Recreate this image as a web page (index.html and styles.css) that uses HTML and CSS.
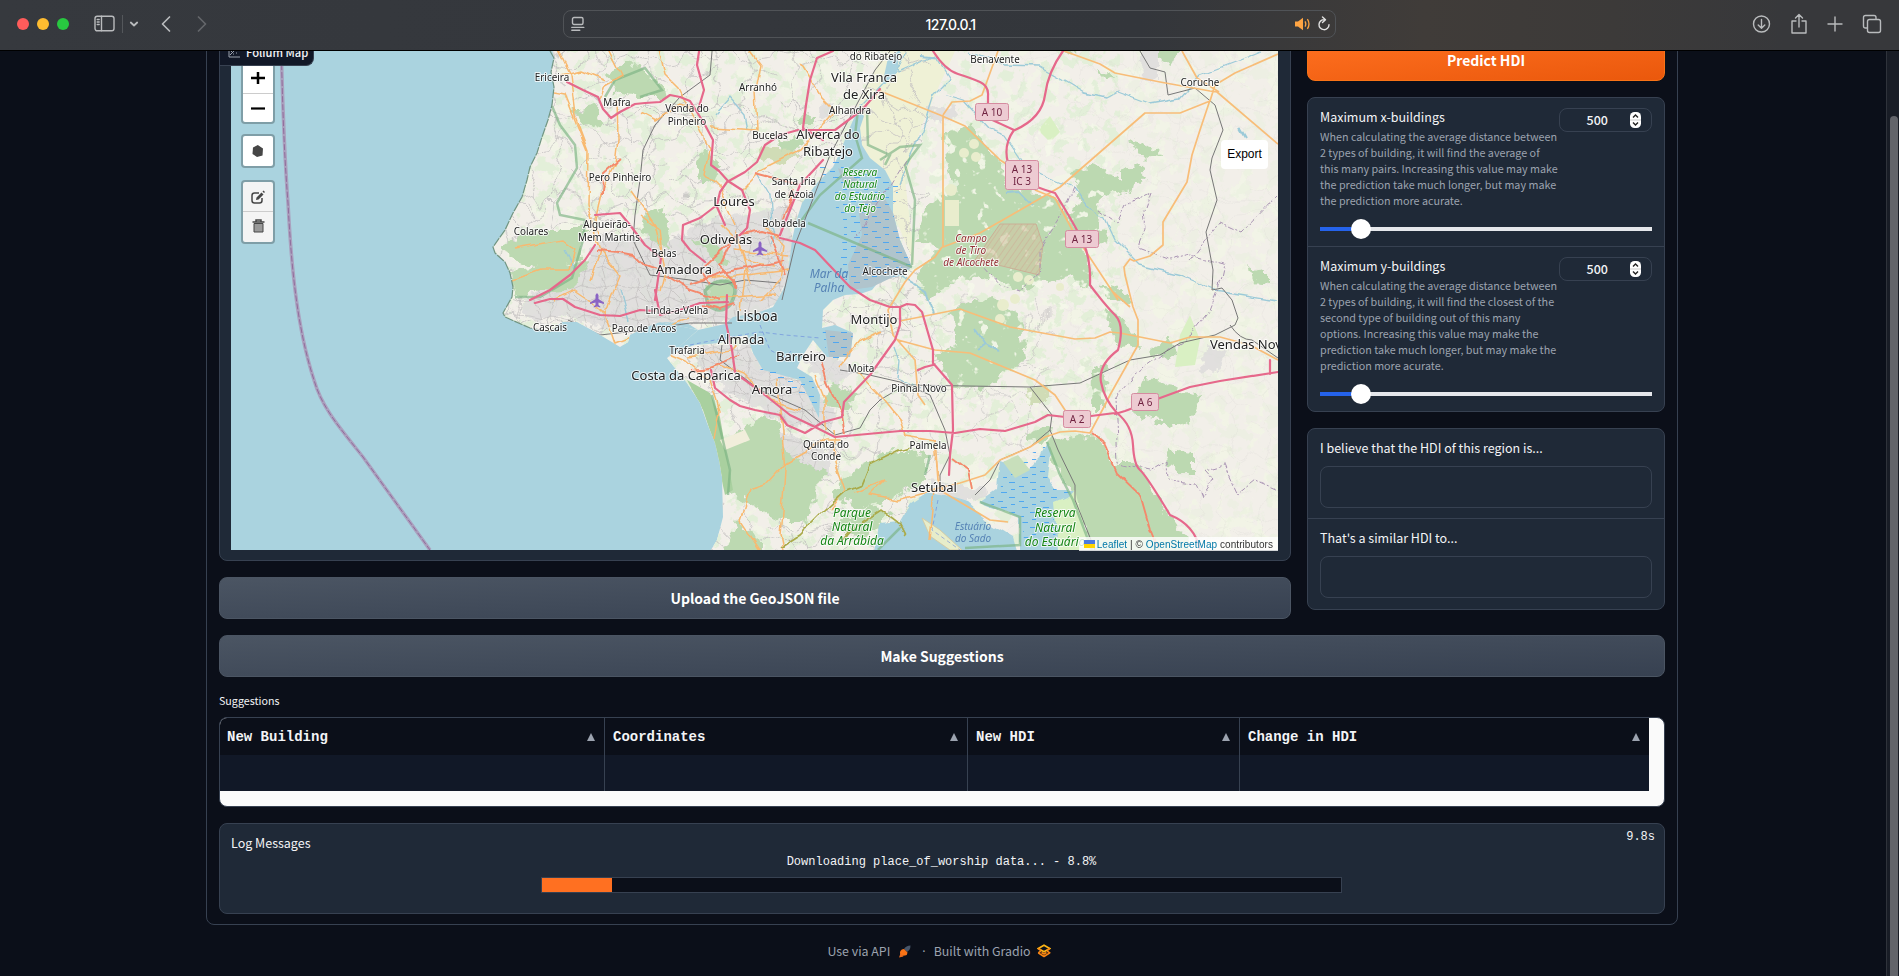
FILE: index.html
```html
<!DOCTYPE html>
<html lang="en">
<head>
<meta charset="utf-8">
<title>127.0.0.1</title>
<link rel="stylesheet" href="styles.css">
</head>
<body>
<header class="toolbar">
  <div class="tools-left">
    <span class="light red"></span><span class="light yellow"></span><span class="light green"></span>
    <svg class="ico sidebar" width="22" height="18" viewBox="0 0 22 18"><rect x="1" y="1.2" width="19" height="14.6" rx="2.2"/><path d="M7.5 1.2v14.600M3.200 4.500h2M3.200 7h2M3.200 9.500h2"/></svg>
    <span class="sep"></span>
    <svg class="ico" width="10" height="8" viewBox="0 0 10 8"><path d="M1.800 2.500 5 5.500l3.200-3" stroke-width="1.800"/></svg>
    <svg class="ico back" width="12" height="18" viewBox="0 0 12 18"><path d="M9.500 2 2.500 9l7 7" stroke-width="1.700"/></svg>
    <svg class="ico forward" width="12" height="18" viewBox="0 0 12 18"><path d="m2.500 2 7 7-7 7" stroke-width="1.700"/></svg>
  </div>
  <div class="address">
    <svg class="ico" width="14" height="16" viewBox="0 0 14 16"><rect x="1.500" y="1.500" width="10.500" height="7" rx="1.500"/><path d="M.8 11.400h12M.8 14.300h8"/></svg>
    <span class="host">127.0.0.1</span>
    <svg class="speaker" width="16" height="14" viewBox="0 0 16 14"><path d="M0 4.500h3L8 .8v12.400L3 9.500H0z" fill="#fea443"/><path d="M10 4.300q1.600 2.700 0 5.400M12.400 2.200q3.200 4.800 0 9.600" fill="none" stroke="#fea443" stroke-width="1.300"/></svg>
    <svg class="ico reload" width="14" height="16" viewBox="0 0 14 16"><path d="M7.500 3.700A5 5 0 1 0 12 8.700M5.500 1l3 2.800-3 2.700" stroke-width="1.400"/></svg>
  </div>
  <div class="tools-right">
    <svg class="ico" width="19" height="20" viewBox="0 0 19 20"><circle cx="9.500" cy="10" r="8"/><path d="M9.500 5.500v8.500M6.200 11l3.300 3.200 3.300-3.200"/></svg>
    <svg class="ico" width="18" height="22" viewBox="0 0 18 22"><path d="M6 8H2v12h14V8h-4M9 14V2M5.500 5 9 1.500 12.500 5"/></svg>
    <svg class="ico" width="16" height="18" viewBox="0 0 16 18"><path d="M8 2v14M1 9h14"/></svg>
    <svg class="ico" width="20" height="20" viewBox="0 0 20 20"><rect x="5.500" y="5.500" width="13" height="13" rx="2"/><path d="M5 14H3.500q-2 0-2-2V3.500q0-2 2-2H12q2 0 2 2V5"/></svg>
  </div>
</header>
<main class="viewport">
  <div class="scrollbar"><div class="thumb"></div></div>
  <div class="app">
    <div class="columns">
      <section class="left">
        <div class="panel map-panel">
          <div class="block-label"><svg width="12" height="12" viewBox="0 0 12 12"><path d="M1 0v11h11M2 9l7-7M3 5l1 1M6 4h1M8 7h1M5 8h1M10 4h1" fill="none" stroke="#9ca3af"/></svg>Folium Map</div>
          <div class="map">
<svg class="tiles" width="1047" height="510" viewBox="231 40 1047 510">
  <defs>
    <pattern id="lanes" width="96" height="84" patternUnits="userSpaceOnUse"><g fill="none" stroke="#c4c1c1" stroke-width=".8" stroke-linejoin="round">
      <path d="M0 14l12 5 7-4 13 8 12-3 9 10 16-4 10 8 17-3M0 56l9-6 14 7 9-4 13 12 15-5 9 7 12-9 15-2M22 0l-5 12 8 13-5 13 9 12-6 15 5 10-6 9M70 0l4 14-8 14 10 10-4 17 7 13-9 16M20 38l14-5 10 9 14-4 8-10M45 65l-5-14 4-9-6-11M76 38l20-6M0 32l20 6M28 75l16-6 8 15M52 0l-5 11-3 9M79 68l8 6 9 4"/></g></pattern>
    <pattern id="streets" width="33" height="31" patternUnits="userSpaceOnUse"><g fill="none" stroke="#bab7b8" stroke-width=".7"><path d="M0 7l12 3 9-4 12 1M0 21l9-3 13 5 11-2M8 0l3 11-3 9 3 11M23 0l-2 7 5 13-3 11M11 11l12 12"/></g></pattern>
    <pattern id="marsh" width="21" height="15" patternUnits="userSpaceOnUse"><path d="M1 2.500h6M11 6.500h5M3 9.500h4M14 12.500h6" stroke="#45a3f3" stroke-width=".9"/></pattern>
    <pattern id="hatch" width="5" height="5" patternUnits="userSpaceOnUse" patternTransform="rotate(35)"><path d="M0 0v5" stroke="#cf9a89" stroke-width=".7"/></pattern>
    <filter id="woods" x="0" y="0" width="100%" height="100%"><feTurbulence type="fractalNoise" baseFrequency=".075" numOctaves="5" seed="8"/><feColorMatrix values="0 0 0 0 .76  0 0 0 0 .86  0 0 0 0 .68  14 0 0 0 -7.600"/></filter>
    <filter id="groves" x="0" y="0" width="100%" height="100%"><feTurbulence type="fractalNoise" baseFrequency=".06" numOctaves="4" seed="33"/><feColorMatrix values="0 0 0 0 .89  0 0 0 0 .93  0 0 0 0 .78  0 0 14 0 -7.800"/></filter>
    <filter id="clear" x="0" y="0" width="100%" height="100%"><feTurbulence type="fractalNoise" baseFrequency=".09" numOctaves="3" seed="21"/><feColorMatrix values="0 0 0 0 .91  0 0 0 0 .94  0 0 0 0 .82  0 12 0 0 -7.900"/></filter>
    <filter id="ragged" x="-5%" y="-5%" width="110%" height="110%"><feTurbulence type="fractalNoise" baseFrequency=".09" numOctaves="3" seed="4"/><feDisplacementMap in="SourceGraphic" scale="16" xChannelSelector="R" yChannelSelector="G"/></filter>
    <filter id="winding" x="-5%" y="-5%" width="110%" height="110%"><feTurbulence type="fractalNoise" baseFrequency=".045" numOctaves="2" seed="12"/><feDisplacementMap in="SourceGraphic" scale="9" xChannelSelector="R" yChannelSelector="G"/></filter>
    <filter id="wander" x="0" y="0" width="100%" height="100%"><feTurbulence type="fractalNoise" baseFrequency=".02" numOctaves="3" seed="5"/><feDisplacementMap in="SourceGraphic" scale="48" xChannelSelector="R" yChannelSelector="G"/></filter>
    <clipPath id="land"><path d="M550 40L554 58 551 72 554 87 552 105 548 120 542 137 537 153 530 167 527 180 522 197 513 213 505 230 493 247 495 253 505 262 510 273 513 287 512 297 503 313 505 317 530 328 550 332 562 322 577 322 597 333 620 347 628 342 630 335 647 327 660 322 698 330 667 358 687 383 700 403 707 423 715 443 719 460 722 477 723 517 717 540 711 550H1278V40z"/></clipPath>
  </defs>
  <rect x="231" y="40" width="1047" height="510" fill="#aad3df"/>
  <g fill="none"><path d="M281 40C283 120 284 150 288 203C291 260 296 325 314 380C322 408 340 428 363 457L430 550" stroke="#aa98b9" stroke-width="3.500" opacity=".85"/>
  <path d="M281 40C283 120 284 150 288 203C291 260 296 325 314 380C322 408 340 428 363 457L430 550" stroke="#916c9c" stroke-width="1" stroke-dasharray="6 2"/></g>
  <g clip-path="url(#land)">
    <rect x="480" y="40" width="798" height="510" fill="#f2efe9"/>
    <rect x="480" y="40" width="798" height="510" filter="url(#groves)" opacity=".7"/>
    <rect x="480" y="40" width="640" height="510" filter="url(#woods)" opacity=".9"/>
    <rect x="1120" y="40" width="158" height="510" filter="url(#woods)" opacity=".3"/>
    <path d="M890 40L960 40 935 95 922 125 905 180 915 265 893 213 878 170 862 150 857 107z" fill="#eff1d6"/>
    <g filter="url(#wander)"><rect x="460" y="20" width="470" height="550" fill="url(#lanes)"/><rect x="930" y="300" width="120" height="150" fill="url(#lanes)" opacity=".7"/><rect x="1020" y="40" width="280" height="520" fill="url(#lanes)" opacity=".16"/></g>
    <g fill="#dcdbdb" opacity=".8" filter="url(#ragged)">
      <path d="M522 300L540 290 580 275 600 235 640 240 680 235 700 225 745 215 790 205 795 245 782 300 740 320 690 322 640 330 600 325 560 316 525 320zM700 348L750 343 765 370 800 380 835 410 830 430 790 425 760 410 720 385 700 370zM805 355L830 350 850 370 840 390 815 375zM765 420L800 440 830 450 830 475 790 470 768 450zM930 480L990 490 980 500 940 500zM820 105L832 103 830 118 818 115zM1138 40L1160 40 1160 80 1140 78zM1205 345L1230 350 1215 375 1202 368zM930 105L958 108 950 120 935 122z"/>
    </g>
    <path filter="url(#winding)" opacity=".8" d="M512 300L530 285 580 270 600 235 640 240 680 235 700 225 745 215 790 205 795 245 782 300 740 325 690 328 640 335 600 330 560 320 515 320zM700 345L750 340 765 370 800 380 835 410 830 430 790 425 760 410 720 385 700 370zM765 420L800 440 830 450 830 475 790 470 768 450zM860 300L900 300 910 330 880 345 855 320z" fill="url(#streets)"/>
    <g fill="#bcd9b1" filter="url(#ragged)">
      <path d="M945 133L970 127 1003 163 1007 187 1053 193 1077 230 1087 260 1093 290 1067 276 1020 290 980 275 953 282 925 300 917 273 940 247 915 240 927 207 957 187 947 160z"/>
      <path d="M1073 170L1093 165 1113 173 1127 190 1100 197 1097 227 1110 240 1087 247 1067 213 1080 200zM1120 172L1143 165 1145 178 1130 190 1120 186zM1130 140L1155 148 1163 158 1140 156zM1060 40L1085 42 1070 58zM1095 68L1118 75 1105 78zM1160 40L1180 42 1172 66 1160 60zM1247 262L1253 275 1268 270 1268 282 1250 280zM1100 285L1125 290 1130 305 1110 300zM1105 310L1120 315 1140 345 1120 350z"/>
      <path d="M953 310L990 297 1020 317 1025 360 985 387 955 388 933 352 957 345zM1047 443L1097 433 1117 473 1133 490 1147 523 1152 560 1093 560 1075 500 1057 463zM1097 463L1137 463 1170 517 1200 560 1150 560 1120 477zM1140 377L1163 380 1180 390 1200 397 1190 423 1170 428 1133 413zM1027 433L1050 423 1048 440 1030 442zM1167 450L1193 453 1193 475 1168 468zM1150 350L1170 340 1178 355 1160 360zM1093 368L1107 365 1105 410 1092 410z"/>
      <path d="M720 447L767 413 780 423 783 447 800 463 827 470 813 497 807 523 780 520 747 503 727 493zM830 385L855 393 850 410 825 405zM725 560L735 520 760 540 760 560zM833 495L850 470 895 450 925 455 925 480 890 500 860 508zM835 523L870 505 890 515 860 540z"/>
      <path d="M517 237L547 230 587 230 580 260 547 270 515 260 500 248zM513 270L560 265 590 262 570 290 530 292 515 300zM605 73L627 63 645 72 662 85 665 97 635 97 618 92zM573 110L595 105 602 123 588 128zM640 218L660 205 672 230 668 248 645 240zM693 163L703 150 720 165 715 180 700 180zM797 118L815 115 815 125 800 125zM778 140L800 138 803 150 780 155zM693 240L705 238 730 260 720 265zM708 283L733 278 733 300 710 298z"/>
    </g>
    <path d="M687 380L710 393 720 417 727 457 733 490 725 495 713 440 703 410z" fill="#a9d09f"/>
    <path d="M760 148L790 150 800 155 782 165 762 158zM1028 390L1045 385 1045 405 1030 405z" fill="#d0dcb6" filter="url(#ragged)"/>
    <path d="M720 440L745 430 750 440 725 450z" fill="#f1eedb"/>
    <path d="M1050 116L1060 132 1050 142 1038 130zM1190 315L1200 340 1195 365 1175 367 1180 335zM1050 500L1075 490 1090 550 1060 550z" fill="#d9f0c3"/>
    <rect x="920" y="120" width="190" height="310" filter="url(#clear)" opacity=".9"/>
    <g fill="#e9edcd"><path d="M945 200h14v26h-14z"/><circle cx="974" cy="144" r="5"/><circle cx="964" cy="153" r="5"/><circle cx="976" cy="157" r="5"/><circle cx="951" cy="190" r="6"/><circle cx="1018" cy="277" r="5"/><circle cx="1029" cy="280" r="5"/><circle cx="1060" cy="287" r="4"/><circle cx="1003" cy="305" r="6"/><circle cx="1015" cy="299" r="5"/><circle cx="1000" cy="319" r="5"/></g>
    <path d="M1000 224L1036 224 1043 245 1039 275 1002 266 975 260z" fill="#d0c4a2" opacity=".6"/><path d="M1000 224L1036 224 1043 245 1039 275 1002 266 975 260z" fill="url(#hatch)" stroke="#cfa18d" stroke-width=".7"/>
    <path d="M640 345L630 335 647 327 660 322 687 323 698 330 725 324 733 317 757 313 773 307 782 292 787 280 790 257 792 240 796 222 802 203 817 183 833 167 841 150 848 132 854 118 858 110 864 116 860 128 862 145 870 158 885 170 893 185 893 213 900 240 912 267 900 276 880 280 872 290 860 294 845 295 833 300 823 310 822 328 835 325 853 333 850 357 827 357 813 340 803 355 797 368 812 377 820 395 819 418 810 400 800 380 763 370 753 353 747 335 735 337 720 343 695 345 680 350 660 362z" fill="#aad3df"/>
    <path d="M850 290L848 265 862 235 858 205 880 190 893 213 900 240 912 267 895 276 872 287zM825 330L853 333 850 357 829 357zM838 168L860 180 850 190 842 180z" fill="#b0c4cc"/>
    <path d="M835 160L900 183 893 213 900 240 912 267 895 276 850 290 838 262 845 230 835 205zM822 328L853 333 850 362 827 357zM755 366L812 377 820 418 805 398zM815 165L840 160 840 175 820 185z" fill="url(#marsh)"/>
    <g filter="url(#winding)"><path d="M1047 442L1050 453 1047 477 1057 490 1073 490 1067 498 1055 503 1060 560H1020L1020 517 980 502 997 490 1000 460 1027 470 1040 457zM875 560L880 525 900 523 912 503 927 493 947 497 967 503 990 523 1013 537 1020 560z" fill="#aad3df"/></g>
    <path d="M1045 445L1047 477 1057 490 1070 492 1052 503 1056 540H1024L1022 517 985 502 1000 490 1005 470z" fill="url(#marsh)"/>
    <path d="M1003 462L1018 455 1030 470 1015 478z" fill="#c8dfbb"/>
    <path d="M922 518L940 530 962 550 950 550 930 536z" fill="#e7edca" stroke="#d8c89c" stroke-width=".8"/>
    <g fill="none" stroke="#9ccad8" stroke-width="1.300" stroke-linejoin="round" filter="url(#winding)">
      <path d="M857 110L875 92 900 65 910 45M900 51L897 72 935 55 950 78 933 95 922 130 905 165 898 185M968 51L1005 65 1040 66 1065 80 1085 92 1107 97 1118 91 1150 103 1180 98 1200 75 1240 60 1262 51M945 95L962 100 990 130 1005 135 1025 165 1050 178 1072 187 1085 205 1105 218 1115 240 1140 265 1180 275 1215 290 1278 300M895 345L900 360 898 380 920 390M715 115L730 98 745 115 748 130M765 215L775 230 770 245M565 250L575 270M620 290L628 320M757 173L770 195 772 220"/>
      <path d="M975 330L985 345 978 350M985 345L1000 352M1005 193L1020 192 1033 205M1240 128L1246 138M922 55L940 57M900 275L925 290 935 315" stroke-width="2"/>
    </g>
    <path d="M888 58L900 50 897 72 882 85z" fill="#aad3df"/>
    <g fill="none" stroke="#7bb383" stroke-width="2.500" opacity=".65">
      <path d="M552 106L560 125 575 145 577 168 557 203 560 215 585 220 583 240 572 278 540 297 515 297M605 97L615 80 645 68 662 90 640 97M808 223L912 267M858 110L855 135 862 158 820 195 798 225M867 110L868 145 890 155 885 165M880 160L900 147 920 145 905 165 915 200 912 265M1047 442L1060 475 1073 500 1092 550M878 550L900 528M712 395L730 470 728 495M980 502L1020 517 1020 545 965 548M930 455L925 475"/>
      <path d="M705 291Q715 278 728 282T730 305Q720 315 708 305z" stroke-width="3.500" fill="#bcd9b1"/>
    </g>
    <g filter="url(#winding)"><path d="M1150 192L1143 212 1145 230 1138 248 1170 260 1190 255 1225 264 1222 278 1210 310 1190 335 1135 375 1115 400 1118 463 1150 470 1167 460 1168 480 1196 483 1202 498 1215 480 1206 470 1225 465 1238 494 1255 480 1278 490M1190 262L1220 222 1242 232 1278 195M1100 210L1117 222 1125 205 1150 192M905 160L880 200 855 240M1072 187L1060 220 1040 250 1040 270 1020 291 1000 285 985 268" fill="none" stroke="#a994b3" stroke-width="1" stroke-dasharray="6 2 2 2"/></g>
    <g fill="none" stroke="#777" stroke-width="1" stroke-linejoin="round">
      <path d="M713 40L710 75 680 97 655 125 643 150 640 180 635 215 633 240 650 275 690 280 720 285 745 280 780 283M782 300L795 245 830 155 875 70 890 51M568 320L600 335 645 330 690 323 732 323M722 345L720 360 760 390 805 410 835 435 860 428 870 410 880 400 905 385 1030 387 1080 383 1130 360 1160 355 1180 343 1215 335 1235 325 1238 318 1232 300 1222 288 1212 290 1213 270 1206 232 1217 200 1210 170 1212 158 1223 130 1215 105 1195 88 1168 95 1165 72 1150 68 1140 51M840 370L865 374 900 382 930 395 945 430 950 455 940 475 940 485M1030 387L1052 415 1050 430 1058 450 1075 485 1075 500 1095 550M1050 430L1030 447 1000 460 990 480 975 495"/>
      <path d="M1230 325Q1240 340 1252 340L1278 358"/>
    </g>
    <g fill="none" stroke="#f8b970" stroke-width="1.500" stroke-linejoin="round" filter="url(#winding)">
      <path d="M555 45L570 75 575 115 588 150 587 205 595 235 600 250 590 280M553 93L565 95 575 120 587 150M607 45L622 75 605 85 600 100M617 100L618 140 615 165 602 190 595 220 600 235M658 45L665 75 680 90 710 150 705 175 720 190 735 225M745 45L760 65 755 90 757 130 710 127M800 63L820 95 835 110 800 150 760 170 740 190M560 75L580 70 605 80M640 112L655 120 680 105 700 110M555 300L575 290 590 300 605 315 615 345 640 335 690 318M512 280L540 270 570 270 575 250 562 240 515 248M630 190L655 225 665 270 660 290M600 250L620 275 610 300 605 315M640 215L660 230 663 255M720 225L740 245 750 285M735 230L745 260 775 265M765 225L785 245 780 280 760 300M700 280L790 270M705 300L775 295M735 250L790 255M745 270L740 310"/>
      <path d="M667 352L685 360 710 380 720 410 715 440M687 357L730 350 735 345M700 370L720 365 745 375 770 400 800 410M778 380L780 410 785 470 783 500 780 535 783 550M785 463L765 485 750 490 740 520 760 550M785 463L825 440 840 440M833 430L835 460 845 490 830 510M815 375L825 400 825 430M855 493L885 480 870 495 900 500 935 490 930 540M840 365L860 340 880 330M860 374L880 395 900 420 905 435 935 440 938 480 945 490"/>
    </g>
    <g fill="none" stroke="#f8bd78" stroke-width="1.700" stroke-linejoin="round">
      <path d="M880 91L940 115 965 126 1000 160 1008 165M1035 190L1055 198 1075 235 1118 300M943 115V247L980 233 1060 187 1145 113 1180 113 1210 101 1215 85 1235 73 1278 54M998 51L982 95 970 101 952 102 943 115M1064 51L1100 64 1115 73 1160 82 1210 91 1217 92 1278 144M1182 51L1197 78 1219 92M1210 100L1200 130 1192 155 1187 182 1163 222 1163 245 1150 256 1134 261 1130 259 1124 267 1125 275 1133 307 1138 320 1138 345 1110 395 1105 405 1090 433M942 247L935 257 915 270 905 282 888 310 893 335 915 360 918 395 925 405M900 321L960 309 1010 327 1075 339 1095 338 1110 332 1120 333 1170 343 1190 337 1220 337 1250 345 1278 360M898 340L935 350 970 353 1035 380 1055 395 1067 413M1090 433L1075 431 1060 432 1045 437 1030 447 1012 455 1000 460 985 475 960 483 930 490M1113 292L1130 307M935 440L938 480 943 492 970 508 990 520 1008 522"/>
    </g>
    <path d="M840 542L850 530 880 510 900 525 905 535M780 548L800 535 825 510 845 492 862 485 870 465 900 450 910 447" fill="none" stroke="#aaaa49" stroke-width="1.700" filter="url(#winding)"/>
    <g fill="none" stroke="#f4896c" stroke-width="1.900" filter="url(#winding)">
      <path d="M620 160L603 175 602 195M595 250L620 252 635 255 645 265 660 270M780 235L762 230 735 235 720 265 735 280 735 290M770 235L780 260 785 275M700 305L720 310 735 305M665 275L690 290 720 300M733 240L700 270 710 285M690 285L735 270 785 260M820 360L827 385 842 415 845 435M690 370L710 368 740 355M952 458L968 470 972 490M1090 433L1105 445 1117 473 1140 495 1150 530 1158 550M800 185L755 173M795 190L783 220"/>
    </g>
    <g fill="none" stroke="#e6688b" stroke-width="2.200" stroke-linejoin="round" stroke-linecap="round">
      <path d="M700 45L697 65 704 90 698 110M567 82L583 90 598 97 603 109 611 118 620 112 635 104 645 103 660 102 670 95 680 97 690 101 697 112 705 125 713 140 711 165 719 171 728 181 742 190 750 210 747 228 740 235M833 51L817 58 810 80 806 105 803 128 823 140M880 89L862 110 835 130 810 130 798 130 780 135 765 145 757 162 745 172 727 182M727 182L720 192 717 205 700 218 683 225 682 240 690 250 705 262M717 207L725 225M823 160L800 185 790 210 780 235M780 238L800 243 815 250 850 287 870 300 890 307 900 307M595 215L620 213 630 225 645 245 660 257M595 245L585 260 570 275 550 290 530 300M661 258L655 300M535 303L550 299 563 299 575 307 600 315 620 316 640 310 655 311M655 290L660 315 680 310 700 303 728 302M727 295L726 323 732 350 735 372M711 370L715 388 730 400 740 406 755 410 780 415 787 425 805 433 823 422 842 417 844 402 870 375 895 340 900 325 900 307 907 304 915 305 922 312 933 350 933 363 952 385 953 430 950 455 949 475M742 378L765 395 790 415 815 427 835 437 900 431 930 431 955 433 980 429 1005 431 1035 422 1048 415 1065 417"/>
      <path d="M933 51Q945 70 958 74T980 82 988 96L988 118 1014 130Q1003 145 1008 163T1055 193Q1075 225 1083 242T1090 285Q1105 305 1115 315T1118 350Q1098 365 1101 382T1117 413Q1132 425 1133 445T1140 470 1170 515Q1195 525 1200 550M1063 51Q1048 72 1045 95T1015 130M1115 414L1125 411 1160 398 1190 387 1220 381 1278 372M1270 374L1270 360M933 365L925 367 918 370M1091 416L1115 413"/>
    </g>
    <g fill="none" stroke="#5b79df" stroke-width=".8" stroke-dasharray="4 3" opacity=".65"><path d="M690 345L730 337 760 332 785 335 820 338M760 325L770 350 785 358 792 350M938 500L932 530 960 550"/></g>
  </g>
  <path d="M550 51L554 58 551 72 554 87 552 105 548 120 542 137 537 153 530 167 527 180 522 197 513 213 505 230 493 247 495 253 505 262 510 273 513 287 512 297 503 313 505 317 530 328 550 332" fill="none" stroke="#719582" stroke-width="1.200" stroke-dasharray="9 1"/>
  <g fill="#8a63c4"><path id="plane" d="M760 241l1.500 2v4l5.500 3.500v1.500l-5.500-1.500v2.500l1.800 1.500v1l-3.300-1-3.300 1v-1l1.800-1.500v-2.500l-5.500 1.500v-1.500l5.500-3.500v-4z"/><use href="#plane" x="-163" y="52"/></g>
  <g class="town">
    <text x="552" y="81">Ericeira</text><text x="617" y="106">Mafra</text><text x="687" y="112">Venda do</text><text x="687" y="125">Pinheiro</text><text x="758" y="91">Arranhó</text><text x="876" y="60">do Ribatejo</text><text x="850" y="114">Alhandra</text><text x="770" y="139">Bucelas</text><text x="620" y="181">Pero Pinheiro</text><text x="794" y="185">Santa Iria</text><text x="794" y="198">de Azoia</text><text x="784" y="227">Bobadela</text><text x="531" y="235">Colares</text><text x="607" y="228">Algueirão-</text><text x="609" y="241">Mem Martins</text><text x="664" y="257">Belas</text><text x="885" y="275">Alcochete</text><text x="677" y="314">Linda-a-Velha</text><text x="550" y="331">Cascais</text><text x="644" y="332">Paço de Arcos</text><text x="687" y="354">Trafaria</text><text x="861" y="372">Moita</text><text x="919" y="392">Pinhal Novo</text><text x="826" y="448">Quinta do</text><text x="826" y="460">Conde</text><text x="928" y="449">Palmela</text><text x="995" y="63">Benavente</text><text x="1200" y="86">Coruche</text>
  </g>
  <g class="city">
    <text x="864" y="82">Vila Franca</text><text x="864" y="99">de Xira</text><text x="828" y="139">Alverca do</text><text x="828" y="156">Ribatejo</text><text x="734" y="206">Loures</text><text x="726" y="244">Odivelas</text><text x="684" y="274">Amadora</text><text x="741" y="344">Almada</text><text x="757" y="321" class="capital">Lisboa</text><text x="874" y="324">Montijo</text><text x="801" y="361">Barreiro</text><text x="686" y="380">Costa da Caparica</text><text x="772" y="394">Amora</text><text x="934" y="492">Setúbal</text><text x="1210" y="349" class="start">Vendas Nov</text>
  </g>
  <g class="nature"><text x="860" y="176">Reserva</text><text x="860" y="188">Natural</text><text x="860" y="200">do Estuário</text><text x="860" y="212">do Tejo</text></g>
  <g class="nature large"><text x="852" y="517">Parque</text><text x="852" y="531">Natural</text><text x="852" y="545">da Arrábida</text><text x="1055" y="517">Reserva</text><text x="1055" y="532">Natural</text><text x="1055" y="546">do Estuário</text></g>
  <g class="sea"><text x="829" y="278">Mar da</text><text x="829" y="292">Palha</text></g>
  <g class="sea small"><text x="973" y="530">Estuário</text><text x="973" y="542">do Sado</text></g>
  <g class="military"><text x="971" y="242">Campo</text><text x="971" y="254">de Tiro</text><text x="971" y="266">de Alcochete</text></g>
  <g class="shield"><rect x="975.500" y="103.500" width="33" height="17" rx="2"/><text x="992" y="116">A 10</text><rect x="1005.500" y="160.500" width="33" height="29" rx="2"/><text x="1022" y="173">A 13</text><text x="1022" y="185">IC 3</text><rect x="1065.500" y="230.500" width="33" height="17" rx="2"/><text x="1082" y="243">A 13</text><rect x="1131.500" y="393.500" width="27" height="17" rx="2"/><text x="1145" y="406">A 6</text><rect x="1063.500" y="410.500" width="27" height="17" rx="2"/><text x="1077" y="423">A 2</text></g>
</svg>
            <div class="controls">
              <div class="bar zoom"><a><svg width="14" height="14" viewBox="0 0 14 14"><path d="M7 1v12M0 7h14" stroke="#000" stroke-width="2.500"/></svg></a><a><svg width="14" height="14" viewBox="0 0 14 14"><path d="M0 6.500h14" stroke="#000" stroke-width="2.200"/></svg></a></div>
              <div class="bar draw"><a><svg width="14" height="14" viewBox="0 0 14 14"><path d="M6.800 1 12 4.500l-.5 7-5.500 1.500-4.500-3 .5-6.500z" fill="#464646"/></svg></a></div>
              <div class="bar edit"><a><svg width="14" height="14" viewBox="0 0 14 14"><path d="M8 3H3.500Q1 3 1 5.500v5Q1 13 3.500 13h5q2.500 0 2.500-2.500V8" fill="none" stroke="#464646" stroke-width="1.500"/><path d="m5 10 .5-2.500 5-5 2 2-5 5zM11.500 1.500l1-1 1.500 1.500-1 1z" fill="#464646"/></svg></a><a><svg width="13" height="14" viewBox="0 0 13 14"><path d="M2 4.500h9V13H2z" fill="#999" stroke="#464646"/><path d="M.5 3h12M4 2.500V1h5v1.500" fill="none" stroke="#464646" stroke-width="1.500"/></svg></a></div>
            </div>
            <div class="export">Export</div>
            <div class="attribution"><svg width="11" height="8" viewBox="0 0 11 8"><path fill="#4c7be1" d="M0 0h11v4H0z"/><path fill="#ffd500" d="M0 4h11v4H0z"/></svg><a>Leaflet</a> | © <a>OpenStreetMap</a> contributors</div>
          </div>
        </div>
        <button class="button secondary">Upload the GeoJSON file</button>
      </section>
      <section class="right">
        <button class="button primary">Predict HDI</button>
        <div class="panel">
          <div class="field first">
            <div class="head"><div><div class="label">Maximum x-buildings</div><p class="info">When calculating the average distance between<br>2 types of building, it will find the average of<br>this many pairs. Increasing this value may make<br>the prediction take much longer, but may make<br>the prediction more acurate.</p></div>
            <div class="number"><span>500</span><svg width="11" height="16" viewBox="0 0 11 16"><rect width="11" height="16" rx="4.500" fill="#fff"/><path d="M0 8h11" stroke="#ccc"/><path d="M3 5.500 5.500 3 8 5.500M3 10.500 5.500 13 8 10.500" fill="none" stroke="#222" stroke-width="1.400"/></svg></div></div>
            <div class="slider"><i></i><b></b></div>
          </div>
          <div class="field second">
            <div class="head"><div><div class="label">Maximum y-buildings</div><p class="info">When calculating the average distance between<br>2 types of building, it will find the closest of the<br>second type of building out of this many<br>options. Increasing this value may make the<br>prediction take much longer, but may make the<br>prediction more acurate.</p></div>
            <div class="number"><span>500</span><svg width="11" height="16" viewBox="0 0 11 16"><rect width="11" height="16" rx="4.500" fill="#fff"/><path d="M0 8h11" stroke="#ccc"/><path d="M3 5.500 5.500 3 8 5.500M3 10.500 5.500 13 8 10.500" fill="none" stroke="#222" stroke-width="1.400"/></svg></div></div>
            <div class="slider"><i></i><b></b></div>
          </div>
        </div>
        <div class="panel">
          <div class="answer"><div class="label">I believe that the HDI of this region is...</div><div class="textbox"></div></div>
          <div class="answer last"><div class="label">That's a similar HDI to...</div><div class="textbox"></div></div>
        </div>
      </section>
    </div>
    <button class="button secondary">Make Suggestions</button>
    <div class="suggestions">
      <div class="caption">Suggestions</div>
      <div class="table">
        <div class="cell th">New Building<i></i></div><div class="cell th">Coordinates<i></i></div><div class="cell th">New HDI<i></i></div><div class="cell th">Change in HDI<i></i></div>
        <div class="cell"></div><div class="cell"></div><div class="cell"></div><div class="cell"></div>
      </div>
    </div>
    <div class="panel log">
      <div class="log-head"><span class="label">Log Messages</span><span class="mono">9.8s</span></div>
      <div class="mono status">Downloading place_of_worship data... - 8.8%</div>
      <div class="progress"><div style="width:8.8%"></div></div>
    </div>
  </div>
  <footer><span>Use via API</span>
    <svg class="rocket" width="12" height="13" viewBox="0 0 12 13"><path d="M5 4Q7 .5 11.500.5q0 4.500-3.500 6.500z" fill="#475569"/><path d="M1 7q1-3 4-3l3.500 3.500q0 2.500-2.500 3l-3.500.5q-2-1-1.500-4z" fill="#f97316"/><path d="M0 12.500l1.500-4 3 3z" fill="#ea6a1c"/></svg>
    <span class="dot">·</span><span>Built with Gradio</span>
    <svg class="gradio" width="14" height="14" viewBox="0 0 14 14"><path d="M7 1.200 12.800 4.500 7 7.800 1.200 4.500z" fill="none" stroke="#fdb515" stroke-width="1.700"/><path d="M1.200 4.500 4 6.500M12.800 4.500 10 6.500M1.200 8.800 7 12.500l5.800-3.700L10 7M1.200 8.800 4 7M4.500 8.500 7 10l2.500-1.500" fill="none" stroke="#f98513" stroke-width="1.600" stroke-linejoin="round"/></svg>
  </footer>
</main>
</body>
</html>
```
FILE: styles.css
```css
* { box-sizing: border-box; }
body { margin: 0; width: 1899px; height: 976px; overflow: hidden; background: #0b0f19; color: #f3f4f6; font-family: "Noto Sans CJK SC", sans-serif; }
.toolbar { height: 51px; background: linear-gradient(90deg, #36393e 0, #33363b 60%, #403c39 75%, #3c3a39 85%, #37383b 94%); border-bottom: 1px solid #000; display: flex; align-items: flex-start; }
.ico { fill: none; stroke: #b9bbbd; stroke-width: 1.4; stroke-linecap: round; stroke-linejoin: round; flex: none; }
.tools-left { width: 563px; height: 47px; display: flex; align-items: center; padding-left: 17px; }
.light { width: 12px; height: 12px; border-radius: 50%; margin-right: 8px; }
.red { background: #ff5c5b; }
.yellow { background: #febc30; }
.green { background: #28c840; }
.sidebar { margin-left: 17px; }
.sep { width: 1px; height: 18px; background: #54575b; margin: 0 6px 0 6px; }
.back { margin-left: 21px; }
.forward { margin-left: 24px; opacity: .35; }
.address { width: 773px; height: 28px; margin-top: 10px; border: 1px solid #505357; border-radius: 8px; display: flex; align-items: center; padding: 0 4px 0 7px; }
.host { flex: 1; text-align: center; padding-left: 21px; font: 500 14px Inter, sans-serif; letter-spacing: -.5px; color: #fff; }
.speaker { margin-right: 6px; }
.reload { stroke: #e0e0e0; }
.tools-right { flex: 1; height: 47px; display: flex; align-items: center; justify-content: flex-end; gap: 19px; padding-right: 17px; }
.viewport { height: 925px; position: relative; overflow: hidden; }
.scrollbar { position: absolute; right: 0; top: 0; width: 13px; height: 925px; background: #191d26; border-left: 1px solid #2f333b; }
.thumb { width: 8px; height: 900px; margin: 65px 0 0 3px; border-radius: 4px; background: #62646a; }
.app { width: 1472px; margin: -26px 0 0 206px; padding: 13px 12px 10px; border: 1px solid #374151; border-radius: 8px; display: flex; flex-direction: column; gap: 16px; }
.columns { display: flex; gap: 16px; height: 580px; }
.left { width: 1072px; display: flex; flex-direction: column; gap: 16px; }
.right { width: 358px; display: flex; flex-direction: column; gap: 16px; }
.panel { background: #1f2937; border: 1px solid #374151; border-radius: 8px; }
.map-panel { height: 522px; position: relative; padding: 0 12px 0 11px; }
.block-label { position: absolute; z-index: 2; left: 0; top: 0; width: 94px; height: 26px; border: 1px solid #374151; border-width: 0 1px 1px 0; border-radius: 8px 0 8px 0; background: #111827; display: flex; align-items: center; gap: 6px; padding: 0 0 2px 8px; font-size: 11.2px; font-weight: 500; white-space: nowrap; }
.block-label svg { flex: none; }
.map { position: relative; height: 511px; overflow: hidden; }
.tiles { display: block; font-family: "Noto Sans", sans-serif; }
.tiles text { text-anchor: middle; paint-order: stroke; stroke: rgba(255,255,255,.75); stroke-width: 2px; stroke-linejoin: round; fill: #222; }
.tiles text.start { text-anchor: start; }
.town { font-size: 9.9px; }
.city { font-size: 13px; }
.capital { font-size: 13.600px; }
.nature, .military, .sea { font-style: italic; font-size: 10px; }
.tiles .nature text { fill: #168616; }
.large { font-size: 12px; }
.sea { font-size: 12px; }
.sea.small { font-size: 10px; }
.tiles .sea text { fill: #5683b5; stroke: none; }
.tiles .military text { fill: #932f35; }
.shield { font-size: 10px; }
.shield rect { fill: #edcbd2; stroke: #d58ca0; }
.tiles .shield text { fill: #702341; stroke: none; }
.controls { position: absolute; left: 10px; top: 10px; display: flex; flex-direction: column; gap: 10px; }
.bar { width: 34px; border: 2px solid rgba(0,0,0,.25); border-radius: 4px; background: #fff; background-clip: padding-box; }
.bar a { display: flex; align-items: center; justify-content: center; height: 30px; }
.bar a + a { border-top: 1px solid #ccc; }
.zoom { height: 74px; padding-top: 11px; }
.draw { height: 34px; }
.edit { height: 64px; margin-top: 2px; background-color: #f4f4f4; }
.edit a { height: 29px; }
.export { position: absolute; left: 990px; top: 100px; width: 47px; height: 29px; border-radius: 4px; background: #fff; color: #000; font: 12px/28px "Liberation Sans", sans-serif; text-align: center; }
.attribution { position: absolute; right: 0; bottom: 0; height: 14px; padding: 0 5px; background: rgba(255,255,255,.8); color: #333; font: 10px/15px "Liberation Sans", sans-serif; letter-spacing: .06px; white-space: nowrap; }
.attribution a { color: #0078a8; }
.attribution svg { margin-right: 2px; }
.button { height: 42px; flex: none; border-radius: 8px; border: 1px solid #4b5563; color: #fff; font: 700 14px "Noto Sans CJK SC", sans-serif; padding: 0 0 1px; }
.secondary { background: linear-gradient(to bottom right, #4b5563, #374151); }
.primary { border-color: #f97316; background: linear-gradient(to bottom right, #ff7020, #ea580c); }
.label { font-size: 12.500px; line-height: 20px; font-weight: 400; white-space: nowrap; }
.info { margin: 0; color: #9ca3af; font-size: 10.750px; line-height: 16px; white-space: nowrap; }
.field { padding: 9px 12px 0; }
.first { height: 149px; border-bottom: 1px solid #374151; }
.second { height: 164px; }
.head { display: flex; justify-content: space-between; }
.head .info { padding-top: 2px; }
.number { width: 93px; height: 24px; margin: 1px 0 0 -20px; flex: none; border: 1px solid #374151; border-radius: 8px; display: flex; align-items: center; justify-content: flex-end; gap: 22px; padding-right: 10px; font-size: 12.500px; font-weight: 500; line-height: 18px; }
.number span { padding-bottom: 1px; }
.slider { height: 20px; margin-top: 10px; display: flex; align-items: center; position: relative; background: linear-gradient(#e5e7eb, #e5e7eb) center / 100% 4px no-repeat; }
.slider i { width: 41px; height: 4px; background: #2563eb; }
.slider b { width: 20px; height: 20px; margin-left: -10px; border-radius: 50%; background: #fff; }
.answer { height: 90px; padding: 9px 12px 0; border-bottom: 1px solid #374151; }
.answer.last { border: 0; }
.textbox { height: 42px; margin-top: 8px; border: 1px solid #374151; border-radius: 8px; }
.caption { font-size: 10.700px; line-height: 15px; height: 24px; }
.table { height: 90px; border: 1px solid #374151; border-radius: 8px; overflow: hidden; background: #fafafa; display: grid; grid-template-columns: 385px 363px 272px 409px; grid-template-rows: 37px 36px; }
.cell { background: #111827; border-right: 1px solid #374151; }
.cell:nth-child(4n) { border-right: 0; }
.th { background: #0b0f19; display: flex; align-items: center; justify-content: space-between; padding: 0 9px 0 8px; font: 700 14px "Liberation Mono", monospace; }
.th:first-child { padding-left: 7px; }
.th i { border: 4.5px solid transparent; border-top: 0; border-bottom: 8px solid #9ca3af; }
.log { height: 91px; padding: 9px 12px 9px 11px; }
.log-head { display: flex; justify-content: space-between; height: 21px; }
.mono { font: 12px/16px "Liberation Mono", monospace; }
.log-head .mono { margin: -4px -3px 0 0; }
.status { text-align: center; }
.progress { width: 801px; height: 16px; margin: 7px auto 0; border: 1px solid #374151; background: #0b0f19; }
.progress div { height: 100%; background: #ff7021; }
footer { display: flex; justify-content: center; align-items: center; height: 24px; margin: 14px 21px 0 0; color: #9ca3af; font-size: 12.400px; }
.rocket { margin: 0 11px 0 9px; }
.dot { margin-right: 8px; font-family: "Noto Sans", sans-serif; }
.gradio { margin-left: 6px; }
```
